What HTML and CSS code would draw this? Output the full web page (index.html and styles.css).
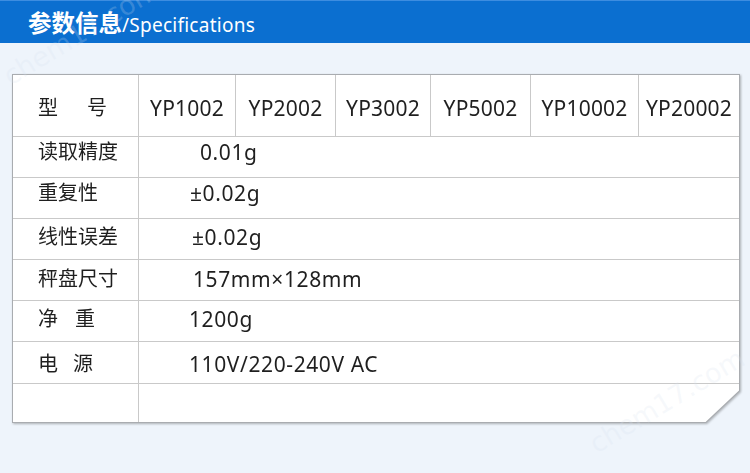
FILE: index.html
```html
<!DOCTYPE html>
<html lang="zh-CN">
<head>
<meta charset="utf-8">
<title>参数信息</title>
<link rel="stylesheet" href="styles.css">
</head>
<body>
<header class="bar">
  <h1 class="title"><span class="title-cn">参数信息</span><span class="title-en">/Specifications</span></h1>
</header>
<main class="content">
  <div class="card">
    <div class="frame">
      <div class="grid">
        <div class="cell head label"><span class="ls-29">型号</span></div>
        <div class="cell head model">YP1002</div>
        <div class="cell head model">YP2002</div>
        <div class="cell head model">YP3002</div>
        <div class="cell head model">YP5002</div>
        <div class="cell head model">YP10002</div>
        <div class="cell head model last-col">YP20002</div>

        <div class="cell label">读取精度</div>
        <div class="cell value last-col"><span class="in-11">0.01g</span></div>

        <div class="cell label">重复性</div>
        <div class="cell value last-col"><span class="in-1">±0.02g</span></div>

        <div class="cell label pt-6">线性误差</div>
        <div class="cell value last-col pt-6"><span class="in-3">±0.02g</span></div>

        <div class="cell label pt-7">秤盘尺寸</div>
        <div class="cell value last-col pt-7"><span class="in-4">157mm×128mm</span></div>

        <div class="cell label pt-6"><span class="ls-17">净重</span></div>
        <div class="cell value last-col pt-6">1200g</div>

        <div class="cell label pt-10"><span class="ls-15">电源</span></div>
        <div class="cell value last-col pt-10">110V/220-240V AC</div>

        <div class="cell label last-row"></div>
        <div class="cell value last-col last-row"></div>
      </div>
    </div>
  </div>
  <div class="mark mark-top">chem17.com</div>
  <div class="mark mark-bottom">chem17.com</div>
</main>
</body>
</html>
```
FILE: styles.css
```css
html, body {
  margin: 0;
  padding: 0;
}
body {
  width: 750px;
  height: 473px;
  overflow: hidden;
  background: #eef4fb;
  font-family: "Noto Sans", "Noto Sans CJK SC", sans-serif;
  color: #1f1f1f;
  position: relative;
}
.bar {
  height: 42px;
  background: #0b6fd0;
  border-top: 1px solid #3d8de0;
  display: flex;
  align-items: center;
  padding-left: 28px;
}
.title {
  margin: 0;
  display: flex;
  align-items: baseline;
  color: #ffffff;
  font-weight: normal;
  padding-top: 2px;
}
.title-cn {
  font-family: "Noto Sans CJK SC", sans-serif;
  font-weight: 700;
  font-size: 23.5px;
  line-height: 28px;
}
.title-en {
  font-size: 19px;
  line-height: 28px;
  letter-spacing: 0.25px;
}
.content {
  padding: 31px 0 0 12px;
}
.card {
  width: 728px;
  filter: drop-shadow(1px 1px 1px rgba(0, 0, 0, 0.28));
}
.frame {
  background: #a9acb0;
  padding: 1px;
  clip-path: polygon(0 0, 100% 0, 100% calc(100% - 32px), calc(100% - 34px) 100%, 0 100%);
}
.grid {
  background: #ffffff;
  display: grid;
  grid-template-columns: 126px 97px 100px 95px 100px 108px 100px;
  grid-template-rows: 62px 41px 41px 41px 41px 41px 42px 38px;
  clip-path: polygon(0 0, 100% 0, 100% calc(100% - 31.4px), calc(100% - 33.4px) 100%, 0 100%);
}
.cell {
  border-right: 1px solid #c9c9c9;
  border-bottom: 1px solid #c9c9c9;
  box-sizing: border-box;
  font-size: 21px;
  line-height: 24px;
  white-space: nowrap;
}
.last-col { border-right: none; }
.last-row { border-bottom: none; }
.head {
  display: flex;
  align-items: center;
  padding-top: 4px;
}
.model {
  justify-content: center;
  letter-spacing: 0.2px;
}
.label {
  font-size: 20px;
  padding-left: 25px;
  padding-top: 3px;
}
.head.label {
  padding-top: 4px;
}
.value {
  grid-column: 2 / 8;
  padding-left: 50px;
  padding-top: 3px;
  letter-spacing: 0.6px;
}
.label.pt-6, .value.pt-6 { padding-top: 6px; }
.label.pt-7, .value.pt-7 { padding-top: 7px; }
.label.pt-10, .value.pt-10 { padding-top: 10px; }
.in-1 { padding-left: 1px; }
.in-3 { padding-left: 3px; }
.in-4 { padding-left: 4px; }
.in-11 { padding-left: 11px; }
.ls-29 { letter-spacing: 29px; }
.ls-17 { letter-spacing: 17px; }
.ls-15 { letter-spacing: 15px; }
.mark {
  position: absolute;
  font-family: "DejaVu Sans", sans-serif;
  font-size: 27px;
  line-height: 32px;
  color: rgba(215, 225, 238, 0.22);
  transform: rotate(-31deg);
  transform-origin: left bottom;
  pointer-events: none;
  white-space: nowrap;
}
.mark-top {
  left: 14px;
  top: 60px;
}
.mark-bottom {
  left: 600px;
  top: 428px;
}
```
